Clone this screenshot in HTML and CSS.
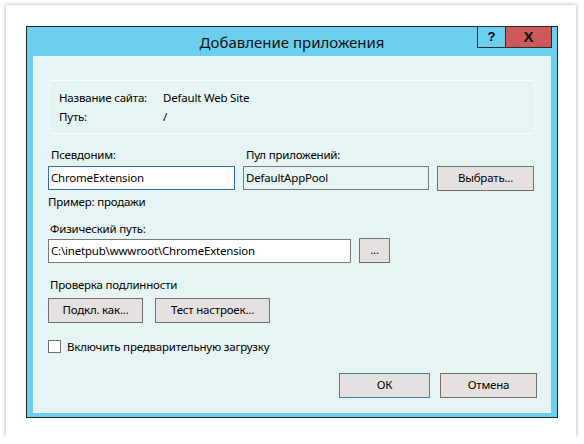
FILE: index.html
```html
<!DOCTYPE html>
<html lang="ru">
<head>
<meta charset="utf-8">
<title>Добавление приложения</title>
<link rel="stylesheet" href="styles.css">
</head>
<body>
<div class="card">
  <div class="dialog">
    <div class="titlebar">
      <div class="title">Добавление приложения</div>
      <div class="controls">
        <div class="ctl help">?</div>
        <div class="ctl close">X</div>
      </div>
    </div>
    <div class="client">
      <div class="info">
        <div class="info-row"><span class="k">Название сайта:</span><span>Default Web Site</span></div>
        <div class="info-row"><span class="k">Путь:</span><span>/</span></div>
      </div>

      <div class="row-alias">
        <div class="field">
          <div class="lbl">Псевдоним:</div>
          <div class="input focused">ChromeExtension</div>
        </div>
        <div class="field">
          <div class="lbl">Пул приложений:</div>
          <div class="input readonly">DefaultAppPool</div>
        </div>
        <div class="btn pick">Выбрать...</div>
      </div>
      <div class="hint">Пример: продажи</div>

      <div class="lbl path-lbl">Физический путь:</div>
      <div class="row-path">
        <div class="input path">C:\inetpub\wwwroot\ChromeExtension</div>
        <div class="btn dots">...</div>
      </div>

      <div class="lbl auth-lbl">Проверка подлинности</div>
      <div class="row-auth">
        <div class="btn connect">Подкл. как...</div>
        <div class="btn test">Тест настроек...</div>
      </div>

      <div class="check-row">
        <span class="checkbox"></span>
        <span>Включить предварительную загрузку</span>
      </div>

      <div class="row-ok">
        <div class="btn ok">ОК</div>
        <div class="btn cancel">Отмена</div>
      </div>
    </div>
  </div>
</div>
</body>
</html>
```

FILE: styles.css
```css
* { box-sizing: border-box; }
html, body { margin: 0; padding: 0; background: #ffffff; }
body {
  font-family: "Noto Sans", "Open Sans", sans-serif;
  font-size: 11.5px;
  letter-spacing: -0.2px;
  color: #000;
}
.card {
  margin: 5px 0 0 6px;
  width: 570px;
  height: 432px;
  background: #ffffff;
  box-shadow: 0 0 4px rgba(0,0,0,0.35);
  padding: 21px 0 0 20px;
}
.dialog {
  width: 532px;
  height: 392px;
  border: 1px solid #262626;
  background: #6ccfee;
  display: flex;
  flex-direction: column;
  padding: 0 6px 4px 6px;
}
.titlebar {
  height: 29px;
  display: grid;
  grid-template-columns: 1fr auto 1fr;
  margin: 0 -6px 0 -6px;
}
.title {
  grid-column: 2;
  font-size: 15px;
  letter-spacing: 0;
  line-height: 30px;
  color: #111;
}
.controls {
  grid-column: 3;
  justify-self: end;
  display: flex;
  margin-top: -1px;
  margin-right: 5px;
  height: 22px;
}
.ctl {
  height: 22px;
  border: 1px solid #2b2b2b;
  font-weight: bold;
  font-family: "Liberation Sans", sans-serif;
  letter-spacing: 0;
  line-height: 20px;
  text-align: center;
  color: #000;
}
.help { width: 29px; background: #6ccfee; font-size: 13px; }
.close { width: 47px; margin-left: -1px; background: #cc5a5a; font-size: 15px; color: #111; }

.client {
  flex: 1;
  background: #e7f4f4;
  padding: 24px 0 0 15px;
}
.info {
  margin-left: 1px;
  width: 486px;
  height: 54px;
  border: 1px solid #fbfdfd;
  border-radius: 2px;
  padding: 7px 0 0 9px;
}
.info-row { display: flex; line-height: 19px; }
.info-row .k { width: 104px; }

.lbl, .hint { line-height: 17px; }
.row-alias {
  display: grid;
  grid-template-columns: 187px 186px 97px;
  column-gap: 8px;
  align-items: end;
  margin-top: 12px;
}
.field .lbl { padding-left: 3px; margin-bottom: 3px; }
.input {
  height: 24px;
  border: 1px solid #7a7a7a;
  background: #ffffff;
  padding-left: 2px;
  line-height: 21px;
  white-space: nowrap;
  overflow: hidden;
}
.input.focused { border-color: #2a6fb0; }
.input.readonly { background: #e7f4f4; }
.btn {
  height: 25px;
  border: 1px solid #707070;
  background: #e6e1e1;
  text-align: center;
  line-height: 22px;
}
.pick { margin-bottom: -1px; }
.hint { margin-top: 3px; padding-left: 0; }
.path-lbl { margin-top: 10px; padding-left: 2px; margin-bottom: 1px; }
.row-path { display: flex; gap: 8px; align-items: center; }
.input.path { width: 303px; }
.dots { width: 31px; }
.auth-lbl { margin-top: 13px; padding-left: 2px; }
.row-auth { display: flex; gap: 12px; margin-top: 5px; }
.connect { width: 95px; }
.test { width: 115px; }
.check-row {
  display: flex;
  align-items: center;
  gap: 6px;
  margin-top: 16px;
  line-height: 15px;
}
.checkbox {
  width: 13px;
  height: 13px;
  border: 1px solid #707070;
  background: #fff;
}
.row-ok {
  display: flex;
  justify-content: flex-end;
  gap: 10px;
  margin-top: 19px;
  margin-right: 14px;
}
.ok { width: 91px; border-color: #3c7fb1; }
.cancel { width: 97px; }
```
